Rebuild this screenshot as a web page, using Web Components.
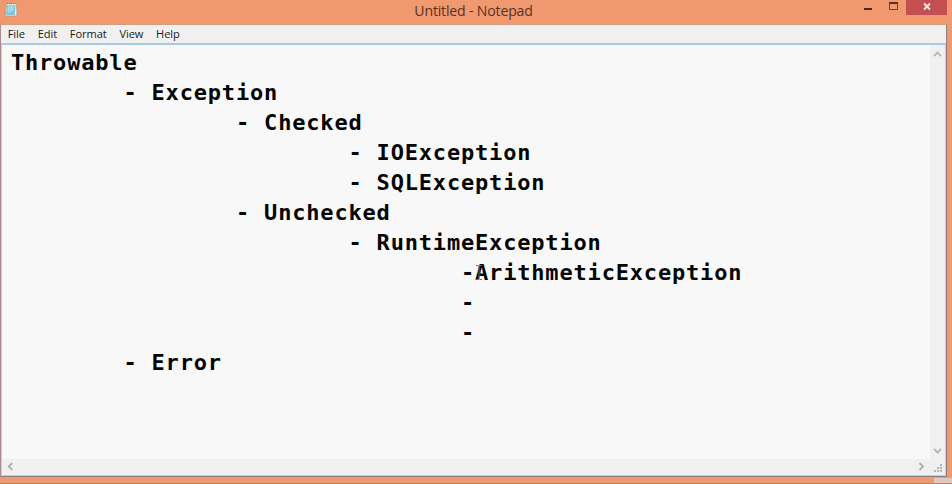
<!DOCTYPE html>
<html lang="en"><head><meta charset="utf-8"><title>Untitled - Notepad</title>
<style>html,body{margin:0;height:100%;overflow:hidden;background:#f0986f}</style></head>
<body><notepad-window></notepad-window>
<script>
const define = (name, html) => customElements.define(name, class extends HTMLElement {
  constructor() {
    super();
    const t = document.createElement('template');
    t.innerHTML = html;
    this.attachShadow({mode: 'open'}).append(t.content.cloneNode(true));
  }
});

define('title-bar', `<style>
:host{display:grid;grid-template-columns:1fr auto 1fr;background:#f0986f;color:#58331f;font:14.1px/21px "Open Sans","Noto Sans",sans-serif;border-bottom:1px solid #d79c80;box-sizing:border-box;height:25px;padding-right:5px}
.icon{padding:2px 0 0 4px;line-height:0}
.title{letter-spacing:-.18px;white-space:pre}
.controls{display:flex;justify-content:flex-end}
svg{display:block}
</style>
<div class="icon"><svg width="16" height="16" viewBox="0 0 16 16"><path d="M2.5 1.5h10l.5 11-1 1.5h-11z" fill="#e6eeeb" stroke="#a99a8c" stroke-width=".8"/><path d="M3 3h8.5l-.8 10H2z" fill="#80c4d2"/><path d="M4 3.5h6.5l-1 5-6 3z" fill="#a3d9e3"/><path d="M3 1.5h9.5" stroke="#857e74" stroke-dasharray="1 1"/></svg></div>
<div class="title"><slot></slot></div>
<div class="controls"><svg width="88" height="24" viewBox="0 0 88 24"><path d="M5 8h8v2H5z" fill="#4b2a1b"/><path d="M30.5 3.5h8v6h-8z" fill="none" stroke="#6f432e"/><path d="M30 2h9v2h-9z" fill="#5b3321"/><path d="M47 0h41v15H47z" fill="#c34f50"/><path d="M65 3.5l6 6M71 3.5l-6 6" stroke="#fbe9e6" stroke-width="1.9"/></svg></div>`);

define('menu-bar', `<style>
:host{display:flex;gap:12.6px;height:18px;padding-left:6.7px;background:#f0f0f0;color:#1b1b1b;font:11.1px/18px "Open Sans","Noto Sans",sans-serif}
</style><slot></slot>`);
define('menu-item', `<style>:host{display:block;white-space:nowrap;letter-spacing:-.05px}</style><slot></slot>`);

define('text-area', `<style>
:host{display:block;position:relative;background:#f8f8f8;color:#050505;overflow:hidden;padding:3px 0 0 8.9px;font:bold 22px/30.05px "DejaVu Sans Mono",monospace;letter-spacing:.82px;white-space:pre}
svg{position:absolute;left:473px;top:219px}
</style><slot></slot><svg width="8" height="18" viewBox="0 0 8 18"><path d="M1 1.5h2l1 1 1-1h2M4 2v13M1 15.5h2l1-1 1 1h2" fill="none" stroke="#6b6b6b"/></svg>`);

define('scroll-v', `<style>:host{display:flex;flex-direction:column;justify-content:space-between;background:#f0f0f0;padding:5px 0 4px 3px}svg{display:block;fill:none;stroke:#b2b2b2;stroke-width:1.8}</style>
<svg width="10" height="8"><path d="M1 6.2L4.5 2.5 8 6.2"/></svg><svg width="10" height="8"><path d="M1 1.8L4.5 5.5 8 1.8"/></svg>`);
define('scroll-h', `<style>:host{display:flex;justify-content:space-between;background:#f0f0f0;padding:3px 4px 0 4px}svg{display:block;fill:none;stroke:#aeaeae;stroke-width:1.8}</style>
<svg width="8" height="10"><path d="M6.3 1L2.7 4.5 6.3 8"/></svg><svg width="8" height="10"><path d="M1.5 1L5 4.5 1.5 8"/></svg>`);
define('size-grip', `<style>:host{display:block;background:#f0f0f0;padding:4px 0 0 4px}svg{display:block}</style>
<svg width="10" height="10" fill="#b4b4b4"><path d="M6 1h2v2H6zM3 4h2v2H3zM6 4h2v2H6zM0 7h2v2H0zM3 7h2v2H3zM6 7h2v2H6z"/></svg>`);

define('notepad-window', `<style>
:host{display:grid;grid-template-rows:25px 452px 7px;width:952px;height:484px;background:#f0986f}
.client{display:grid;grid-template-rows:18px 1fr;margin-right:5px;border-left:1px solid #ae8990;border-right:1px solid #967b80;border-bottom:1px solid #8a8086;box-sizing:border-box}
.edit{display:grid;grid-template-columns:1fr 15px;grid-template-rows:1fr 16px;border:1px solid #b5d3ea;border-top:2px solid #a9cae4;min-height:0}
.bottom{display:flex;justify-content:flex-end;align-items:flex-end;border-bottom:1px solid #c18061}
.bottom i{width:18px;height:5px;background:#dfc9c0}
</style>
<title-bar>Untitled - Notepad</title-bar>
<div class="client"><menu-bar><menu-item>File</menu-item><menu-item>Edit</menu-item><menu-item>Format</menu-item><menu-item>View</menu-item><menu-item>Help</menu-item></menu-bar>
<div class="edit"><text-area>Throwable
        - Exception
                - Checked
                        - IOException
                        - SQLException
                - Unchecked
                        - RuntimeException
                                -ArithmeticException
                                -
                                -
        - Error</text-area><scroll-v></scroll-v><scroll-h></scroll-h><size-grip></size-grip></div></div>
<div class="bottom"><i></i></div>`);
</script></body></html>
